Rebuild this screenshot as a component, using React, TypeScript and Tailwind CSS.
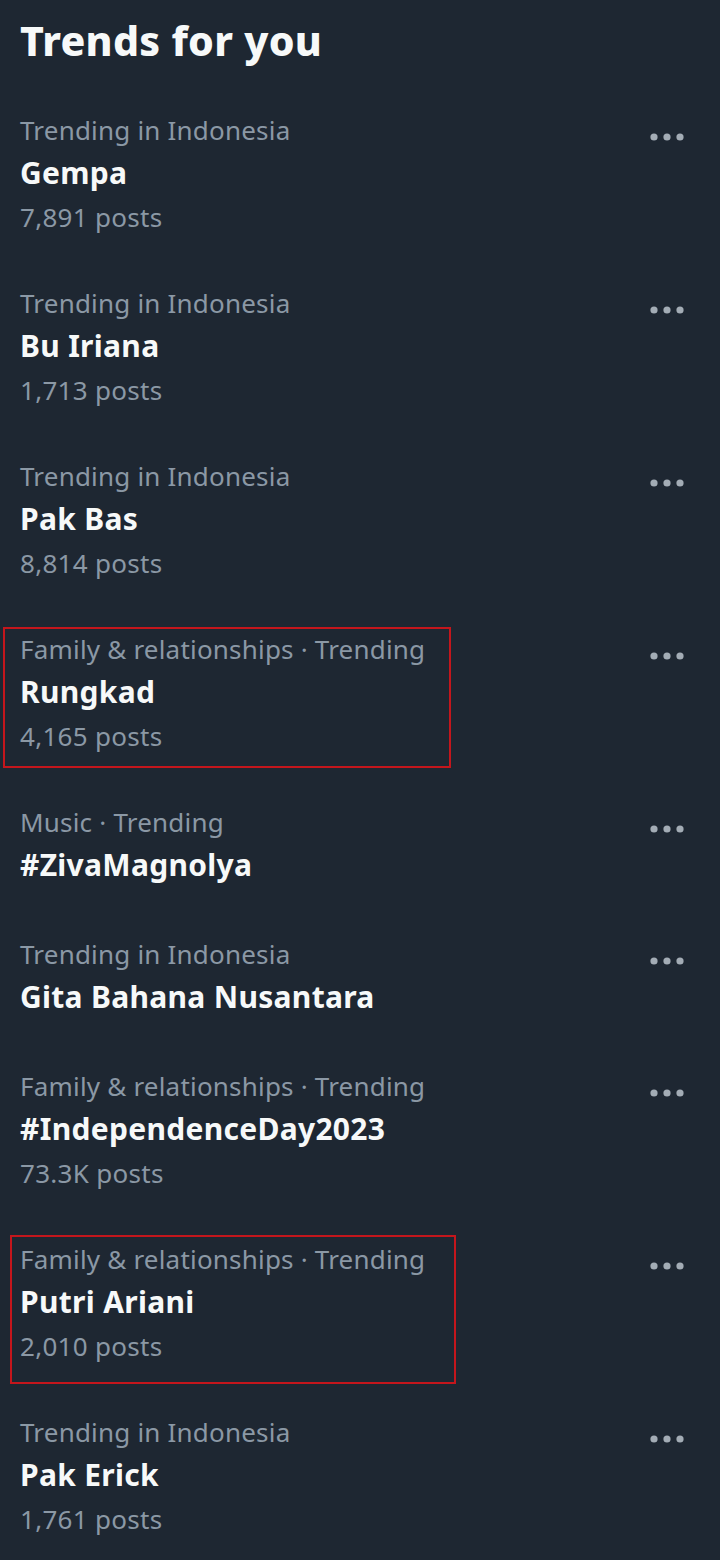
type Trend = {
  category: string;
  name: string;
  posts?: string;
  box?: "a" | "b";
};

const trends: Trend[] = [
  { category: "Trending in Indonesia", name: "Gempa", posts: "7,891 posts" },
  { category: "Trending in Indonesia", name: "Bu Iriana", posts: "1,713 posts" },
  { category: "Trending in Indonesia", name: "Pak Bas", posts: "8,814 posts" },
  { category: "Family & relationships · Trending", name: "Rungkad", posts: "4,165 posts", box: "a" },
  { category: "Music · Trending", name: "#ZivaMagnolya" },
  { category: "Trending in Indonesia", name: "Gita Bahana Nusantara" },
  { category: "Family & relationships · Trending", name: "#IndependenceDay2023", posts: "73.3K posts" },
  { category: "Family & relationships · Trending", name: "Putri Ariani", posts: "2,010 posts", box: "b" },
  { category: "Trending in Indonesia", name: "Pak Erick", posts: "1,761 posts" },
];

function TrendRow({ trend }: { trend: Trend }) {
  return (
    <div className="relative flex items-start justify-between pl-[20px] pr-[36px] pt-[23px] pb-[23px]">
      <div className="flex flex-col">
        <span className="text-[26px] leading-[42px] text-[#8b98a5] tracking-[0.2px]">
          {trend.category}
        </span>
        <span className="text-[30px] leading-[44px] font-bold text-[#f7f9f9] tracking-[0.3px]">
          {trend.name}
        </span>
        {trend.posts && (
          <span className="mt-[4px] text-[26px] leading-[37px] text-[#8b98a5] tracking-[0.3px]">
            {trend.posts}
          </span>
        )}
      </div>
      <div className="mt-[16px] flex h-[24px] items-center text-[#a3acb5]">
        <svg width="34" height="10" viewBox="0 0 34 10" fill="currentColor">
          <circle cx="4" cy="5" r="3.6" />
          <circle cx="17" cy="5" r="3.6" />
          <circle cx="30" cy="5" r="3.6" />
        </svg>
      </div>
      {trend.box === "a" && (
        <div className="pointer-events-none absolute left-[3px] top-[22px] h-[141px] w-[448px] border-2 border-[#c4161c]" />
      )}
      {trend.box === "b" && (
        <div className="pointer-events-none absolute left-[10px] top-[20px] h-[149px] w-[446px] border-2 border-[#c4161c]" />
      )}
    </div>
  );
}

export default function App() {
  return (
    <div
      className="min-h-[1560px] w-[720px] bg-[#1e2732]"
      style={{ fontFamily: '"Noto Sans", "Open Sans", sans-serif' }}
    >
      <h2 className="pl-[20px] text-[41px] font-extrabold leading-[80px] tracking-[0.3px] text-[#f7f9f9]">
        Trends for you
      </h2>
      <div className="mt-[6px] flex flex-col">
        {trends.map((t, i) => (
          <TrendRow key={i} trend={t} />
        ))}
      </div>
    </div>
  );
}
